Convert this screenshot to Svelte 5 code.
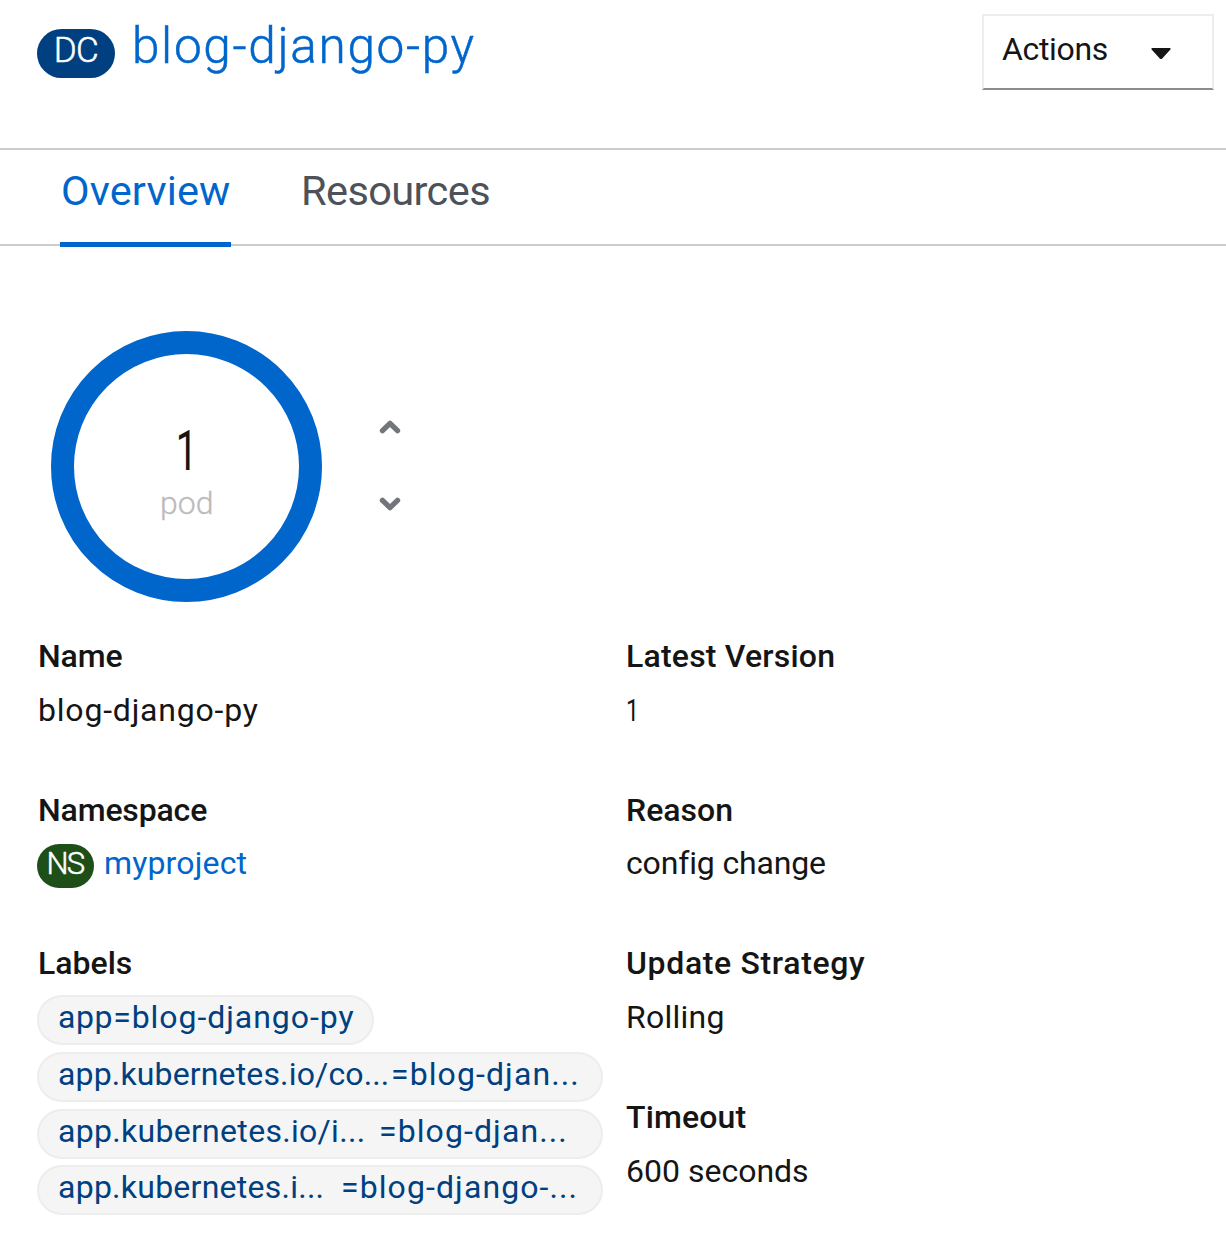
<script>
  const labels = [
    { key: 'app', value: 'blog-django-py', size: 'short' },
    { key: 'app.kubernetes.io/co...', value: 'blog-djan...', size: 'wide' },
    { key: 'app.kubernetes.io/i...', value: 'blog-djan...', size: 'medium' },
    { key: 'app.kubernetes.i...', value: 'blog-django-...', size: 'narrow' }
  ];

  const details = [
    { term: 'Latest Version', value: '1', id: 'version' },
    { term: 'Reason', value: 'config change', id: 'reason' },
    { term: 'Update Strategy', value: 'Rolling', id: 'strategy' },
    { term: 'Timeout', value: '600 seconds', id: 'timeout' }
  ];
</script>

<main>
  <header>
    <span class="badge dc">DC</span>
    <h1>blog-django-py</h1>
    <button class="actions">
      <span>Actions</span>
      <svg width="20" height="12" viewBox="0 0 20 12" aria-hidden="true">
        <path d="M1.3 0H18.7Q20.3.4 19.2 1.8L11.2 10.4Q10 11.8 8.8 10.4L.8 1.8Q-.3.4 1.3 0Z" />
      </svg>
    </button>
  </header>

  <nav>
    <span class="tab active">Overview</span>
    <span class="tab resources">Resources</span>
  </nav>

  <section class="scale">
    <div class="donut">
      <span class="count">1</span>
      <span class="unit">pod</span>
    </div>
    <div class="steppers">
      <svg width="22" height="15" viewBox="0 0 22 15" aria-label="Increase">
        <path d="M3.5 10.6L11 3.4L18.5 10.6" />
      </svg>
      <svg width="22" height="15" viewBox="0 0 22 15" aria-label="Decrease">
        <path d="M3.5 3.4L11 10.6L18.5 3.4" />
      </svg>
    </div>
  </section>

  <section class="columns">
    <dl>
      <div class="item">
        <dt class="t-name">Name</dt>
        <dd class="v-name">blog-django-py</dd>
      </div>
      <div class="item">
        <dt class="t-namespace">Namespace</dt>
        <dd class="resource"><span class="badge ns">NS</span><a class="project">myproject</a></dd>
      </div>
      <div class="item">
        <dt class="t-labels">Labels</dt>
        <dd class="chips">
          {#each labels as label}
            <span class="chip {label.size}"><span class="key">{label.key}</span><span class="value">={label.value}</span></span>
          {/each}
        </dd>
      </div>
    </dl>
    <dl>
      {#each details as item}
        <div class="item">
          <dt class="t-{item.id}">{item.term}</dt>
          <dd class="v-{item.id}">{item.value}</dd>
        </div>
      {/each}
    </dl>
  </section>
</main>

<style>
  :global(body) { background: #fff; }

  main {
    height: 1238px;
    overflow: hidden;
    box-sizing: border-box;
    font-family: Roboto, sans-serif;
    font-size: 32px;
    line-height: 48px;
    color: #151515;
    white-space: nowrap;
  }

  header {
    display: flex;
    align-items: flex-start;
    height: 150px;
    box-sizing: border-box;
    padding: 14px 12px 0 37px;
    border-bottom: 2px solid #ccc;
  }

  .badge {
    box-sizing: border-box;
    flex: none;
    color: #fff;
    text-align: center;
    -webkit-text-stroke: 0.5px currentColor;
  }

  .dc {
    width: 78px;
    height: 49px;
    margin-top: 15px;
    border-radius: 24.5px;
    background: #004080;
    font-size: 35px;
    font-weight: 300;
    line-height: 44px;
    letter-spacing: -0.6px;
  }

  h1 {
    margin: 0 0 0 17px;
    color: #06c;
    font-size: 49.5px;
    font-weight: 300;
    line-height: 64px;
    letter-spacing: 1.65px;
    -webkit-text-stroke: 0.5px currentColor;
  }

  .actions {
    display: flex;
    align-items: flex-start;
    justify-content: space-between;
    box-sizing: border-box;
    width: 232px;
    height: 76px;
    margin-left: auto;
    padding: 9px 41px 0 18px;
    border: 2px solid #ededed;
    border-bottom-color: #8a8d90;
    background: #fff;
    color: #151515;
    font: 400 32px/48px Roboto, sans-serif;
    letter-spacing: -0.35px;
  }

  .actions svg { margin-top: 23px; fill: #151515; }

  nav {
    display: flex;
    gap: 69px;
    height: 96px;
    box-sizing: border-box;
    padding-left: 60px;
    border-bottom: 2px solid #ccc;
  }

  .tab {
    box-sizing: border-box;
    height: 97px;
    padding: 11px 0 0 1px;
    color: #4d5258;
    font-size: 41.5px;
    line-height: 60px;
  }

  .active {
    width: 171px;
    border-bottom: 5px solid #06c;
    color: #06c;
    letter-spacing: 0.15px;
  }

  .resources { letter-spacing: -0.6px; }

  .scale {
    display: flex;
    align-items: center;
    height: 386px;
    box-sizing: border-box;
    padding: 84px 0 30px 51.3px;
  }

  .donut {
    display: flex;
    flex-direction: column;
    align-items: center;
    box-sizing: border-box;
    width: 271px;
    height: 271px;
    padding-top: 66px;
    border: 23px solid #06c;
    border-radius: 50%;
  }

  .count {
    font-size: 55px;
    line-height: 62px;
    transform: scaleX(0.7);
  }

  .unit {
    color: #bbb;
    font-weight: 300;
    line-height: 43px;
    -webkit-text-stroke: 0.3px currentColor;
  }

  .steppers {
    display: flex;
    flex-direction: column;
    gap: 62px;
    margin-left: 56.7px;
  }

  .steppers path {
    fill: none;
    stroke: #72767b;
    stroke-width: 5.4;
    stroke-linecap: round;
    stroke-linejoin: round;
  }

  .columns {
    display: grid;
    grid-template-columns: 589px 1fr;
    padding-left: 37px;
  }

  dl, dd { margin: 0; }
  .item { min-height: 153.67px; }
  dt { margin-bottom: 5.7px; font-weight: 500; }

  .t-name, .v-name, .t-namespace, .t-labels { padding-left: 1px; }
  .t-name, .t-namespace { letter-spacing: -0.15px; }
  .v-name { letter-spacing: 0.8px; }
  .t-version { letter-spacing: 0.2px; }
  .t-strategy { letter-spacing: 0.65px; }
  .t-timeout { letter-spacing: 0.15px; }
  .v-strategy { letter-spacing: 0.25px; }
  .v-reason { letter-spacing: -0.15px; }

  .v-version {
    transform: scaleX(0.72);
    transform-origin: left;
  }

  .resource { display: flex; align-items: flex-start; }

  .ns {
    width: 57px;
    height: 44px;
    margin-top: 4.7px;
    border-radius: 22px;
    background: #1e4f18;
    font-size: 31px;
    font-weight: 300;
    line-height: 40px;
    letter-spacing: -1.8px;
    text-indent: -1px;
  }

  .project {
    margin-left: 10px;
    color: #06c;
    letter-spacing: 0.15px;
  }

  .chips {
    display: flex;
    flex-direction: column;
    align-items: flex-start;
    gap: 6.76px;
    padding-top: 2px;
  }

  .chip {
    display: flex;
    box-sizing: border-box;
    width: 566px;
    height: 50px;
    padding-left: 19px;
    border: 2px solid #ededed;
    border-radius: 25px;
    background: #f5f5f5;
    color: #004080;
    line-height: 40px;
  }

  .value { letter-spacing: 1.1px; }
  .short { width: 337px; }
  .short .key { letter-spacing: 0.6px; }
  .short .value { letter-spacing: 0.95px; }
  .wide .key { width: 333px; letter-spacing: 0.15px; }
  .medium .key { width: 321px; letter-spacing: 0.3px; }
  .narrow .key { width: 283px; letter-spacing: 0.25px; }
</style>
